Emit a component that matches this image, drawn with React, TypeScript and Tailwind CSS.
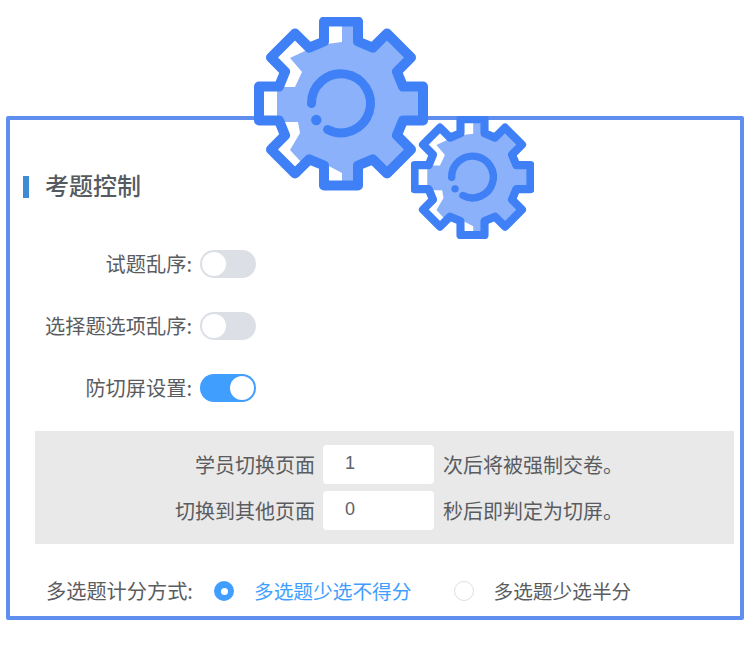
const gearPath = () => {
  // eight teeth round the centre of a 174 box
  const cx = 87;
  const cy = 86.5;
  const local = [
    [-17, -62],
    [-17, -82],
    [17, -82],
    [17, -62],
  ];
  const pts: string[] = [];
  for (let k = 0; k < 8; k++) {
    const a = (k * Math.PI) / 4;
    for (const [x, y] of local) {
      const px = cx + x * Math.cos(a) - y * Math.sin(a);
      const py = cy + x * Math.sin(a) + y * Math.cos(a);
      pts.push(`${px.toFixed(1)} ${py.toFixed(1)}`);
    }
  }
  return "M" + pts.join("L") + "Z";
};

function Gear({ id, className, stroke }: { id: string; className: string; stroke: number }) {
  const d = gearPath();
  return (
    <svg viewBox="0 0 174 174" className={className}>
      <defs>
        <clipPath id={id}>
          <path d={d} />
        </clipPath>
      </defs>
      <path d={d} fill="#ffffff" />
      <g clipPath={`url(#${id})`}>
        <polygon
          fill="#8cb1fb"
          points="88,0 180,0 180,180 88,180 88,156 69,146 48,146 36,133 46,116 44,105 23,105 23,70 41,70 48,55 36,41 53,33 73,27 88,25"
        />
      </g>
      <path d={d} fill="none" stroke="#3f80f6" strokeWidth={stroke} strokeLinejoin="round" />
      <path
        d="M57.5 86.6A29.5 29.5 0 1 1 73.5 112.5"
        fill="none"
        stroke="#3f80f6"
        strokeWidth={stroke - 1}
        strokeLinecap="round"
      />
      <circle cx="62.3" cy="103" r="5.2" fill="#3f80f6" />
    </svg>
  );
}

function Toggle({ on }: { on?: boolean }) {
  return (
    <div
      className={
        on
          ? "flex h-[28px] w-[56px] items-center justify-end rounded-full bg-[#409eff] px-[2px]"
          : "flex h-[28px] w-[56px] items-center justify-start rounded-full bg-[#dcdfe6] px-[2px]"
      }
    >
      <div className="h-[24px] w-[24px] rounded-full bg-white" />
    </div>
  );
}

function SwitchRow({ label, on }: { label: string; on?: boolean }) {
  return (
    <div className="flex h-[28px] items-center">
      <div className="w-[182px] text-right text-[20.2px] leading-[28px] whitespace-nowrap text-[#5a5c60]">{label}:</div>
      <div className="ml-[8px]">
        <Toggle on={on} />
      </div>
    </div>
  );
}

function InputRow({ before, value, after }: { before: string; value: string; after: string }) {
  return (
    <div className="flex h-[39px] items-center">
      <div className="w-[280px] text-right text-[20px] whitespace-nowrap text-[#5a5c60]">{before}</div>
      <input
        readOnly
        value={value}
        className="ml-[8px] h-[39px] w-[111px] rounded-[4px] bg-white pb-[2px] pl-[22px] font-['Liberation_Sans',sans-serif] text-[18px] text-[#606266] outline-none"
      />
      <div className="ml-[9px] text-[20px] whitespace-nowrap text-[#5a5c60]">{after}</div>
    </div>
  );
}

export default function App() {
  return (
    <div className="relative h-[652px] w-[750px] overflow-hidden bg-white pt-[116px] pl-[6px] font-['Noto_Sans_CJK_SC','Noto_Sans',sans-serif]">
      <div className="h-[504px] w-[738px] rounded-[2px] border-[4px] border-[#5f8eee] pt-[56px]">
        <div className="flex h-[22px] items-center pl-[13px]">
          <div className="h-[22px] w-[6px] bg-[#3d8bd4]" />
          <h1 className="ml-[16px] pb-[4px] text-[24px] leading-[22px] font-medium whitespace-nowrap text-[#555a60]">考题控制</h1>
        </div>
        <div className="mt-[52px] flex flex-col gap-[34px]">
          <SwitchRow label="试题乱序" />
          <SwitchRow label="选择题选项乱序" />
          <SwitchRow label="防切屏设置" on />
        </div>
        <div className="mt-[29px] ml-[25px] flex h-[113px] w-[699px] flex-col justify-center gap-[7px] bg-[#e9e9e9]">
          <InputRow before="学员切换页面" value="1" after="次后将被强制交卷。" />
          <InputRow before="切换到其他页面" value="0" after="秒后即判定为切屏。" />
        </div>
        <div className="mt-[32px] flex h-[30px] items-center text-[19.7px] whitespace-nowrap">
          <span className="ml-[36px] w-[168px] text-[20.2px] text-[#5a5c60]">多选题计分方式:</span>
          <span className="flex h-[20px] w-[20px] items-center justify-center rounded-full bg-[#409eff]">
            <span className="h-[7px] w-[7px] rounded-full bg-white" />
          </span>
          <span className="ml-[20px] text-[#409eff]">多选题少选不得分</span>
          <span className="ml-[42px] h-[20px] w-[20px] rounded-full border border-[#dcdfe6] bg-white" />
          <span className="ml-[20px] text-[#5a5c60]">多选题少选半分</span>
        </div>
      </div>
      <Gear id="gear-big" stroke={10} className="absolute top-[17px] left-[254px] h-[174px] w-[174px]" />
      <Gear id="gear-small" stroke={11.5} className="absolute top-[116px] left-[411px] h-[123px] w-[123px]" />
    </div>
  );
}
